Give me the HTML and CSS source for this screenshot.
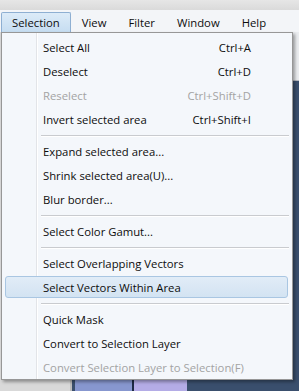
FILE: index.html
```html
<!DOCTYPE html>
<html lang="en">
<head>
    <meta charset="UTF-8">
    <meta name="viewport" content="width=device-width, initial-scale=1.0">
    <title>Selection menu</title>
    <link rel="stylesheet" href="styles.css">
</head>
<body>
    <div id="app">
        <div class="titlebar"></div>
        <nav class="menubar">
            <span class="menu-title active">Selection</span>
            <span class="menu-title">View</span>
            <span class="menu-title">Filter</span>
            <span class="menu-title">Window</span>
            <span class="menu-title">Help</span>
        </nav>
        <div class="workspace">
            <aside class="side-panel"></aside>
            <main class="canvas-area">
                <div class="toolbar"></div>
                <div class="canvas">
                    <div class="doc"></div>
                </div>
            </main>
        </div>

        <div class="dropdown">
            <div class="item"><span>Select All</span><span class="key">Ctrl+A</span></div>
            <div class="item"><span>Deselect</span><span class="key">Ctrl+D</span></div>
            <div class="item disabled"><span>Reselect</span><span class="key">Ctrl+Shift+D</span></div>
            <div class="item"><span>Invert selected area</span><span class="key">Ctrl+Shift+I</span></div>
            <div class="sep"></div>
            <div class="item"><span>Expand selected area...</span></div>
            <div class="item"><span>Shrink selected area(U)...</span></div>
            <div class="item"><span>Blur border...</span></div>
            <div class="sep"></div>
            <div class="item"><span>Select Color Gamut...</span></div>
            <div class="sep"></div>
            <div class="item"><span>Select Overlapping Vectors</span></div>
            <div class="item hover"><span>Select Vectors Within Area</span></div>
            <div class="sep"></div>
            <div class="item"><span>Quick Mask</span></div>
            <div class="item"><span>Convert to Selection Layer</span></div>
            <div class="item disabled"><span>Convert Selection Layer to Selection(F)</span></div>
        </div>
    </div>
</body>
</html>
```

FILE: styles.css
```css
body {
    margin: 0;
    font-family: "Open Sans", "Noto Sans", sans-serif;
    font-size: 11.3px;
    color: #0d0d0d;
}

#app {
    position: relative;
    width: 299px;
    height: 391px;
    overflow: hidden;
    display: flex;
    flex-direction: column;
    background: #dcdcdc;
}

.titlebar {
    height: 10px;
    background: linear-gradient(#e6e6e6, #dadada);
}

.menubar {
    height: 22px;
    display: flex;
    align-items: stretch;
    padding-left: 1px;
    background: #f3f5f8;
}

.menu-title {
    display: flex;
    align-items: center;
    padding: 0 10px;
    border: 1px solid transparent;
    border-bottom: none;
    margin-top: 2px;
}

.menu-title.active {
    background: linear-gradient(#dcebf8, #c6ddf1);
    border-color: #8eafd2;
    border-radius: 2px 2px 0 0;
}

.workspace {
    flex: 1;
    display: flex;
}

.side-panel {
    width: 70px;
    background: #d9d9d9;
    border-right: 2px solid #bcbcbc;
}

.canvas-area {
    flex: 1;
    display: flex;
    flex-direction: column;
}

.toolbar {
    height: 48px;
    background: #eaecef;
    border-bottom: 1px solid #b9bcc2;
}

.canvas {
    flex: 1;
    background: #3a4f6d;
    display: flex;
    align-items: flex-end;
    padding-left: 3px;
}

.doc {
    width: 112px;
    height: 120px;
    background: linear-gradient(to right, #8797cf 57px, #1d2a44 57px, #1d2a44 59px, #b4ace6 59px);
}

/* dropdown menu lies over the app */
.dropdown {
    position: absolute;
    left: 1px;
    top: 32px;
    width: 290px;
    padding: 2px 0 0;
    background: #f4f7fb;
    border: 1px solid #979797;
    box-shadow: 2px 2px 3px rgba(0, 0, 0, 0.35);
}

.dropdown::before {
    content: "";
    position: absolute;
    left: 34px;
    top: 0;
    bottom: 0;
    width: 1px;
    background: #e2e4e8;
    border-right: 1px solid #ffffff;
}

.item {
    position: relative;
    height: 24px;
    display: flex;
    align-items: center;
    justify-content: space-between;
    padding: 0 41px;
}

.item.disabled {
    color: #a3a3a3;
}

.item.hover::before {
    content: "";
    position: absolute;
    left: 3px;
    right: 4px;
    top: 1px;
    bottom: 1px;
    background: linear-gradient(#e1ecf7, #d3e3f2);
    border: 1px solid #a9c6e2;
    border-radius: 3px;
}

.item span {
    position: relative;
}

.sep {
    position: relative;
    height: 0;
    margin: 4px 3px 2px 39px;
    border-top: 1px solid #c9cbcf;
    border-bottom: 1px solid #ffffff;
}
```
